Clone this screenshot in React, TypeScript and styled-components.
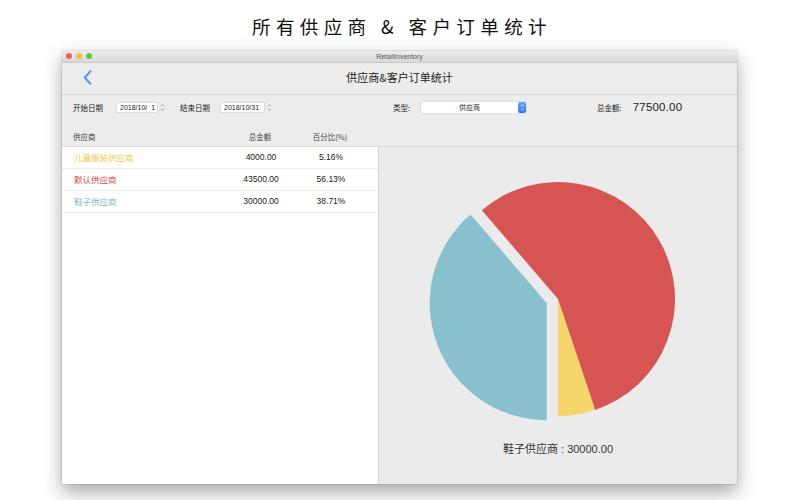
import React from "react"
import styled, { createGlobalStyle } from "styled-components"

const GlobalStyle = createGlobalStyle`
  html, body {
    margin: 0;
    padding: 0;
    background: #ffffff;
  }
  body {
    font-family: "Liberation Sans", "Noto Sans CJK SC", sans-serif;
  }
`

const Page = styled.div`
  width: 800px;
  height: 500px;
  overflow: hidden;
  display: flex;
  flex-direction: column;
  background: #ffffff;
`

const Heading = styled.h1`
  margin: 0;
  height: 51px;
  display: flex;
  align-items: center;
  justify-content: center;
  font-family: "Noto Sans CJK SC", sans-serif;
  font-size: 18.5px;
  font-weight: 400;
  letter-spacing: 5.4px;
  color: #111;
  padding-left: 4px;
`

const Window = styled.div`
  margin-left: 62px;
  width: 675px;
  height: 433px;
  display: flex;
  flex-direction: column;
  background: #ececec;
  box-shadow: 0 8px 18px rgba(0, 0, 0, 0.35), 0 0 0 1px rgba(0, 0, 0, 0.08);
  overflow: hidden;
`

const TitleBar = styled.div`
  height: 11px;
  position: relative;
  display: flex;
  align-items: center;
  justify-content: center;
  background: linear-gradient(#ececec, #d9d9d9);
  border-bottom: 1px solid #c9c9c9;
  font-size: 7px;
  color: #555;
`

const Lights = styled.div`
  position: absolute;
  left: 4px;
  top: 2px;
  display: flex;
  gap: 4px;
`

const Light = styled.span<{ $c: string }>`
  width: 6px;
  height: 6px;
  border-radius: 50%;
  background: ${p => p.$c};
`

const Header = styled.div`
  height: 32px;
  box-sizing: border-box;
  padding-bottom: 4px;
  position: relative;
  display: flex;
  align-items: center;
  justify-content: center;
  border-bottom: 1px solid #d6d6d6;
  font-family: "Noto Sans CJK SC", sans-serif;
  font-size: 11px;
  color: #222;
`

const BackButton = styled.span`
  position: absolute;
  left: 21px;
  top: 7px;
  display: flex;
`

const Filters = styled.div`
  height: 22px;
  margin-top: 1px;
  display: flex;
  align-items: center;
  padding-left: 11px;
  font-size: 7.5px;
  color: #222;
`

const Label = styled.span<{ $ml?: number }>`
  margin-left: ${p => p.$ml ?? 0}px;
  font-family: "Noto Sans CJK SC", sans-serif;
`

const DateBox = styled.span<{ $w: number; $ml: number }>`
  margin-left: ${p => p.$ml}px;
  width: ${p => p.$w}px;
  height: 11px;
  box-sizing: border-box;
  background: #fff;
  border: 1px solid #dcdcdc;
  display: flex;
  align-items: center;
  padding-left: 3px;
  font-size: 7px;
  white-space: pre;
`

const Stepper = styled.span`
  margin-left: 2px;
  display: flex;
`

const Select = styled.span`
  margin-left: 11px;
  width: 105px;
  height: 11px;
  box-sizing: border-box;
  background: #fff;
  border-radius: 2px;
  box-shadow: 0 0 0 0.5px #cfcfcf;
  display: flex;
  align-items: center;
  font-family: "Noto Sans CJK SC", sans-serif;
  font-size: 7px;
`

const SelectText = styled.span`
  flex: 1;
  text-align: center;
`

const SelectArrow = styled.span`
  width: 8px;
  height: 11px;
  border-radius: 2px;
  background: linear-gradient(#6aa5f7, #2f78ee);
  display: flex;
  align-items: center;
  justify-content: center;
`

const Total = styled.span`
  margin-left: 11px;
  font-size: 11.5px;
  color: #222;
  letter-spacing: 0.2px;
`

const ColumnHeader = styled.div`
  height: 29px;
  display: grid;
  grid-template-columns: 147px 80px 60px;
  align-items: end;
  padding: 0 0 4px 11px;
  box-sizing: border-box;
  border-bottom: 1px solid #d8d8d8;
  font-family: "Noto Sans CJK SC", sans-serif;
  font-size: 7.5px;
  color: #444;
`

const HeadCell = styled.span<{ $center?: boolean }>`
  text-align: ${p => (p.$center ? "center" : "left")};
  line-height: 10px;
`

const Body = styled.div`
  flex: 1;
  display: flex;
`

const Table = styled.div`
  width: 316px;
  background: #fff;
  border-right: 1px solid #d4d4d4;
  display: flex;
  flex-direction: column;
`

const Row = styled.div`
  height: 22px;
  box-sizing: border-box;
  padding-bottom: 1px;
  display: grid;
  grid-template-columns: 147px 80px 60px;
  align-items: center;
  padding-left: 12px;
  border-bottom: 1px solid #ececec;
  font-size: 8.5px;
  color: #222;
`

const NameCell = styled.span<{ $c: string }>`
  color: ${p => p.$c};
  font-family: "Noto Sans CJK SC", sans-serif;
`

const NumCell = styled.span`
  text-align: center;
`

const ChartPanel = styled.div`
  flex: 1;
  display: flex;
  flex-direction: column;
  align-items: center;
  padding-top: 22px;
  background: #ebebeb;
`

const ChartLabel = styled.div`
  margin-top: 12px;
  line-height: 14px;
  font-size: 11px;
  color: #333;
`

const LabelName = styled.span`
  font-family: "Noto Sans CJK SC", sans-serif;
`

type Supplier = {
  name: string
  amount: string
  pct: number
  color: string
  textColor: string
}

const suppliers: Supplier[] = [
  { name: "儿童服装供应商", amount: "4000.00", pct: 5.16, color: "#f6d66b", textColor: "#f1c94e" },
  { name: "默认供应商", amount: "43500.00", pct: 56.13, color: "#d65452", textColor: "#d64c4c" },
  { name: "鞋子供应商", amount: "30000.00", pct: 38.71, color: "#88c0ce", textColor: "#7fb9c9" },
]

const CX = 130
const CY = 130
const R = 117
const rad = (d: number) => (d * Math.PI) / 180
const pt = (a: number) => `${(CX + R * Math.cos(rad(a))).toFixed(2)} ${(CY + R * Math.sin(rad(a))).toFixed(2)}`

const slicePath = (from: number, to: number) => {
  const large = to - from > 180 ? 1 : 0
  return `M ${CX} ${CY} L ${pt(from)} A ${R} ${R} 0 ${large} 1 ${pt(to)} Z`
}

const Pie: React.FC = () => {
  // slices go counter-clockwise from the bottom, last one pulled out
  let end = 90
  const slices = suppliers.map((s, i) => {
    const sweep = (s.pct / 100) * 360
    const start = end - sweep
    const d = slicePath(start, end)
    const mid = (start + end) / 2
    end = start
    const explode = i === suppliers.length - 1 ? 12 : 0
    const dx = explode * Math.cos(rad(mid))
    const dy = explode * Math.sin(rad(mid))
    return <path key={s.name} d={d} fill={s.color} transform={`translate(${dx.toFixed(2)} ${dy.toFixed(2)})`} />
  })
  return (
    <svg width="260" height="260" viewBox="0 0 260 260">
      {slices}
    </svg>
  )
}

const UpDown: React.FC<{ color: string; w?: number }> = ({ color, w = 5 }) => (
  <svg width={w} height="9" viewBox="0 0 5 9">
    <path d="M1 3.2 L2.5 1.6 L4 3.2 M1 5.8 L2.5 7.4 L4 5.8" fill="none" stroke={color} strokeWidth="0.7" />
  </svg>
)

export default function App() {
  return (
    <Page>
      <GlobalStyle />
      <Heading>所有供应商 &amp; 客户订单统计</Heading>
      <Window>
        <TitleBar>
          <Lights>
            <Light $c="#ee5d55" />
            <Light $c="#f4bd3b" />
            <Light $c="#5fc549" />
          </Lights>
          RetailInventory
        </TitleBar>
        <Header>
          <BackButton>
            <svg width="9" height="15" viewBox="0 0 9 15">
              <path d="M7.5 1.2 L1.8 7.5 L7.5 13.8" fill="none" stroke="#4b9cf2" strokeWidth="2" strokeLinecap="round" strokeLinejoin="round" />
            </svg>
          </BackButton>
          供应商&amp;客户订单统计
        </Header>
        <Filters>
          <Label>开始日期</Label>
          <DateBox $w={42} $ml={13}>2018/10/  1</DateBox>
          <Stepper><UpDown color="#888" /></Stepper>
          <Label $ml={15}>结束日期</Label>
          <DateBox $w={45} $ml={10}>2018/10/31</DateBox>
          <Stepper><UpDown color="#888" /></Stepper>
          <Label $ml={121}>类型:</Label>
          <Select>
            <SelectText>供应商</SelectText>
            <SelectArrow><UpDown color="#fff" /></SelectArrow>
          </Select>
          <Label $ml={71}>总金额:</Label>
          <Total>77500.00</Total>
        </Filters>
        <ColumnHeader>
          <HeadCell>供应商</HeadCell>
          <HeadCell $center>总金额</HeadCell>
          <HeadCell $center>百分比(%)</HeadCell>
        </ColumnHeader>
        <Body>
          <Table>
            {suppliers.map(s => (
              <Row key={s.name}>
                <NameCell $c={s.textColor}>{s.name}</NameCell>
                <NumCell>{s.amount}</NumCell>
                <NumCell>{s.pct.toFixed(2)}%</NumCell>
              </Row>
            ))}
          </Table>
          <ChartPanel>
            <Pie />
            <ChartLabel>
              <LabelName>鞋子供应商</LabelName> : 30000.00
            </ChartLabel>
          </ChartPanel>
        </Body>
      </Window>
    </Page>
  )
}
